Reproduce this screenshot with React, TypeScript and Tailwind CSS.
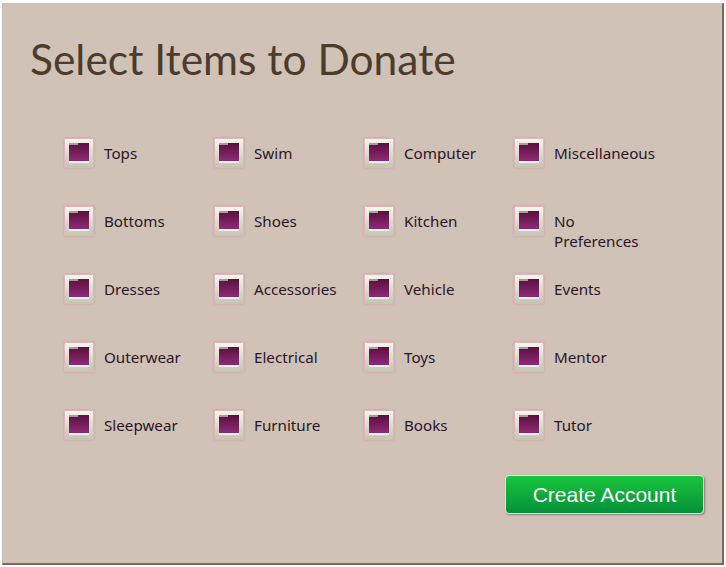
import React from 'react';

const columns: string[][] = [
  ['Tops', 'Bottoms', 'Dresses', 'Outerwear', 'Sleepwear'],
  ['Swim', 'Shoes', 'Accessories', 'Electrical', 'Furniture'],
  ['Computer', 'Kitchen', 'Vehicle', 'Toys', 'Books'],
  ['Miscellaneous', 'No Preferences', 'Events', 'Mentor', 'Tutor'],
];

const rows = [0, 1, 2, 3, 4];

const Checkbox: React.FC = () => (
  <span className="w-[30px] h-[30px] shrink-0 flex items-center justify-center border border-[#e4b4bc] bg-gradient-to-b from-[#f6f6ee] to-[#c4c6b2] shadow-[0_0_2px_rgba(210,120,140,0.6)]">
    <span className="relative w-[20px] h-[20px] bg-gradient-to-b from-[#5c0f3e] to-[#8e2b78] border-b-2 border-[#f2f2ea]">
      <span className="absolute left-0 top-0 w-[9px] h-[2px] bg-[#a89aa0]" />
    </span>
  </span>
);

const App: React.FC = () => {
  return (
    <div className="w-[726px] h-[567px] bg-white pt-[3px] pl-[2px]">
      <div
        className="w-[722px] h-[562px] bg-[#d0c2b7] border-l border-t border-[#c6bdb4] border-r-2 border-b-2 border-r-[#7b6a58] border-b-[#7b6a58] flex flex-col"
        style={{ fontFamily: '"Noto Sans", "Open Sans", sans-serif' }}
      >
        <h1
          className="ml-[27px] mt-[30px] text-[42.5px] leading-[50px] text-[#4b3c2b]"
          style={{ fontFamily: 'Lato, "Noto Sans", sans-serif' }}
        >
          Select Items to Donate
        </h1>
        <div className="ml-[61px] mt-[54px] flex flex-col">
          {rows.map((r) => (
            <div key={r} className="flex h-[68px]">
              {columns.map((col, c) => (
                <label key={c} className="w-[150px] flex items-start gap-[10px]">
                  <Checkbox />
                  <span className="pt-[5px] text-[15.2px] leading-[20px] text-[#2a1626] max-w-[100px]">
                    {col[r]}
                  </span>
                </label>
              ))}
            </div>
          ))}
        </div>
        <div className="flex justify-end mr-[18px] mt-[-3px]">
          <button className="w-[199px] h-[39px] rounded-[4px] border border-[#d8e8d8] bg-gradient-to-b from-[#19c63b] to-[#05903a] text-white text-[21px] leading-none shadow-[1px_1px_2px_rgba(0,0,0,0.35)] flex items-center justify-center"
            style={{ fontFamily: '"Liberation Sans", Arial, sans-serif' }}
          >
            Create Account
          </button>
        </div>
      </div>
    </div>
  );
};

export default App;
